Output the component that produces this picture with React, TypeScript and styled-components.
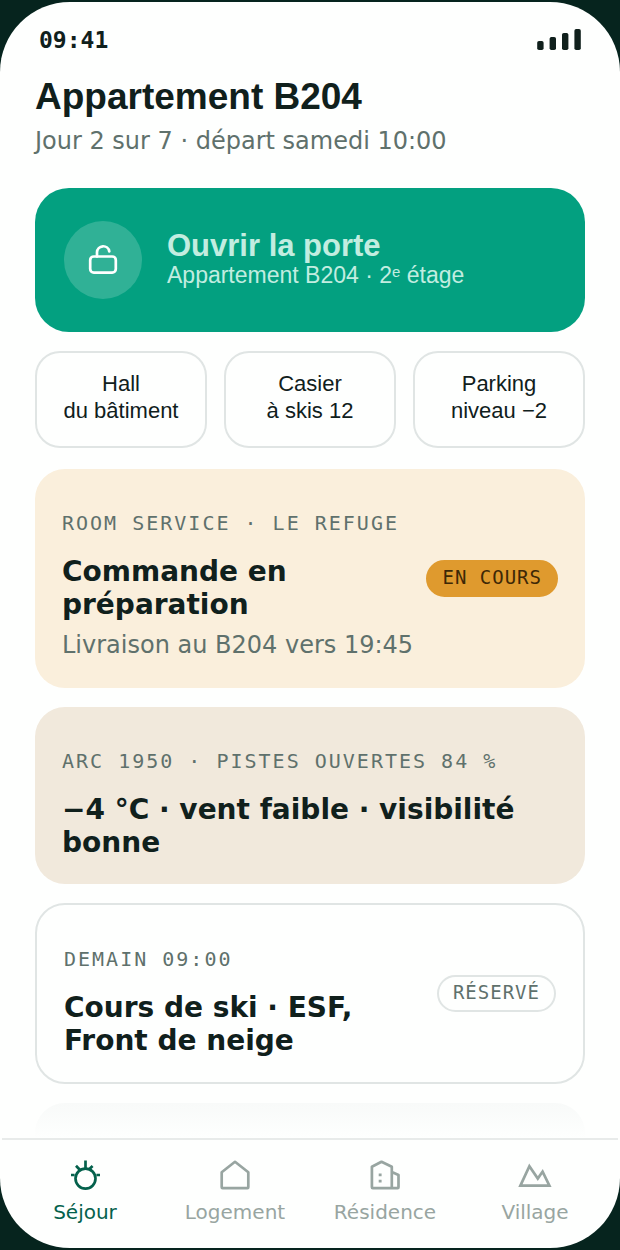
import React from "react";
import styled, { createGlobalStyle, css } from "styled-components";

const ink = "#10201c";
const muted = "#5f716c";
const faint = "#98a5a1";
const line = "#e0e5e4";
const sans = `"DejaVu Sans", sans-serif`;
const mono = `"DejaVu Sans Mono", monospace`;
const ui = `"Liberation Sans", "DejaVu Sans", sans-serif`;

const GlobalStyle = createGlobalStyle`
  *, *::before, *::after { box-sizing: border-box; }
  body {
    margin: 0;
    background: #06241e;
    color: ${ink};
    font-family: ${sans};
  }
  h1, h2, p { margin: 0; }
`;

const Phone = styled.div`
  display: flex;
  flex-direction: column;
  min-height: 100vh;
  border: solid #06241e;
  border-width: 2px 0;
`;

const Screen = styled.div`
  display: flex;
  flex: 1;
  flex-direction: column;
  overflow: hidden;
  border-radius: 70px;
  background: #fefffe;
`;

const StatusBar = styled.header`
  display: flex;
  align-items: center;
  justify-content: space-between;
  padding: 25px 39px 0;
`;

const Clock = styled.time`
  font: bold 23px/26px ${mono};
`;

const Signal = styled.svg`
  display: block;
  width: 44px;
  height: 22px;
  fill: ${ink};
`;

const Content = styled.main`
  display: flex;
  flex: 1;
  flex-direction: column;
  padding: 22px 35px 0;
`;

const Title = styled.h1`
  font: bold 37px/44px ${ui};
`;

const Stay = styled.p`
  margin-top: 6px;
  color: ${muted};
  font-size: 24px;
  line-height: 32px;
`;

const DoorButton = styled.button`
  display: flex;
  align-items: center;
  gap: 25px;
  margin-top: 31px;
  padding: 33px 29px;
  border: 0;
  border-radius: 34px;
  background: #03a080;
  color: #c2ede0;
  font-family: ${ui};
  text-align: left;
  cursor: pointer;
`;

const LockDisc = styled.span`
  display: grid;
  flex: none;
  place-items: center;
  width: 78px;
  height: 78px;
  border-radius: 50%;
  background: #30b196;
  color: #fff;
`;

const DoorText = styled.span`
  display: flex;
  flex-direction: column;
`;

const DoorTitle = styled.strong`
  font-size: 31px;
  line-height: 30px;
`;

const DoorSub = styled.span`
  font-size: 23px;
  line-height: 29px;
`;

const Ordinal = styled.sup`
  font-size: 15px;
  line-height: 1;
  vertical-align: 6px;
`;

const AccessRow = styled.div`
  display: grid;
  grid-template-columns: repeat(3, 1fr);
  gap: 17px;
  margin: 19px 0 21px;
`;

const AccessButton = styled.button`
  padding: 17px 8px 22px;
  border: 2px solid ${line};
  border-radius: 25px;
  background: transparent;
  color: ${ink};
  font: 22px/27px ${ui};
  cursor: pointer;
`;

const Cards = styled.div`
  display: flex;
  flex: 1;
  flex-direction: column;
  gap: 19px;
`;

type Tone = "amber" | "sand" | "plain";

const tones = {
  amber: css`background: #faefdc;`,
  sand: css`background: #f1e9dc;`,
  plain: css`border: 2px solid ${line};`,
};

const Card = styled.article<{ $tone: Tone }>`
  display: flex;
  align-items: center;
  justify-content: space-between;
  gap: 8px;
  padding: 0 27px;
  border-radius: 30px;
  ${({ $tone }) => tones[$tone]}
`;

const CardBody = styled.div`
  padding: 42px 0 25px;
`;

const Eyebrow = styled.p`
  color: ${muted};
  font: 20px/24px ${mono};
  letter-spacing: 2px;
  text-transform: uppercase;
`;

const CardTitle = styled.h2`
  margin-top: 20px;
  font-size: 28px;
  line-height: 33px;
`;

const CardNote = styled.p`
  margin-top: 6px;
  color: ${muted};
  font-size: 24px;
  line-height: 36px;
`;

const Badge = styled.span<{ $filled?: boolean }>`
  flex: none;
  padding: 3px 14px 6px;
  border: 2px solid ${({ $filled }) => ($filled ? "#df9a2e" : line)};
  border-radius: 19px;
  background: ${({ $filled }) => ($filled ? "#df9a2e" : "transparent")};
  color: ${({ $filled }) => ($filled ? "#3d2806" : muted)};
  font: 19px/24px ${mono};
  letter-spacing: 1px;
  text-transform: uppercase;
`;

const NextCard = styled.div`
  flex: 1;
  min-height: 35px;
  border-radius: 30px 30px 0 0;
  background: linear-gradient(#f8faf9, #fefffe);
`;

const TabBar = styled.nav`
  display: grid;
  grid-template-columns: repeat(4, 1fr);
  margin: 0 2px;
  padding: 17px 8px 23px;
  border-top: 2px solid #e8ebea;
`;

const Tab = styled.a<{ $active?: boolean }>`
  display: flex;
  flex-direction: column;
  align-items: center;
  gap: 6px;
  color: ${({ $active }) => ($active ? "#04614c" : faint)};
  font-size: 20px;
  line-height: 26px;
  text-decoration: none;
`;

const Icon = styled.svg`
  display: block;
  width: 36px;
  height: 36px;
  fill: none;
  stroke: currentColor;
  stroke-width: 2.7;
`;

const tabs = [
  {
    label: "Séjour",
    icon: (
      <>
        <circle cx="18.5" cy="21.6" r="10" />
        <path d="M18.5 3.5V12M4 18H7.6M29.4 18H33M9 8.8L13 13M25.6 9L21.6 12.8" />
      </>
    ),
  },
  {
    label: "Logement",
    icon: <path strokeLinejoin="round" d="M4.7 15.2L18 4.8L31.3 15.2V30.3Q31.3 31.2 30.4 31.2H5.6Q4.7 31.2 4.7 30.3Z" />,
  },
  {
    label: "Résidence",
    icon: (
      <>
        <path
          strokeLinejoin="round"
          d="M24.8 31.2H5.8Q4.9 31.2 4.9 30.3V9.8L14.5 4.8L24.8 9.8V31.2H30.6Q31.5 31.2 31.5 30.3V18L24.8 14.9"
        />
        <path d="M11.7 17.9H14.6M11.7 24.2H14.6" />
      </>
    ),
  },
  {
    label: "Village",
    icon: <path d="M3.4 28.6L12.4 9.2L20.8 21.6L25.6 14.6L32.4 28.6Z" />,
  },
];

const accesses = [
  ["Hall", "du bâtiment"],
  ["Casier", "à skis 12"],
  ["Parking", "niveau −2"],
];

export default function App() {
  return (
    <>
      <GlobalStyle />
      <Phone>
        <Screen>
          <StatusBar>
            <Clock>09:41</Clock>
            <Signal viewBox="0 0 44 22" aria-hidden="true">
              <rect x="0.2" y="12" width="6.4" height="9" rx="1.8" />
              <rect x="12.6" y="8" width="6.4" height="13" rx="1.8" />
              <rect x="25" y="4" width="6.4" height="17" rx="1.8" />
              <rect x="37.4" y="0" width="6.4" height="21" rx="1.8" />
            </Signal>
          </StatusBar>

          <Content>
            <Title>Appartement B204</Title>
            <Stay>Jour 2 sur 7 · départ samedi 10:00</Stay>

            <DoorButton type="button">
              <LockDisc>
                <Icon viewBox="0 0 36 36" aria-hidden="true">
                  <rect x="5.2" y="14.5" width="25.6" height="16.2" rx="3.6" />
                  <path strokeLinecap="round" d="M12 14.5V10.2A6.2 6.2 0 0 1 24.3 9.4" />
                </Icon>
              </LockDisc>
              <DoorText>
                <DoorTitle>Ouvrir la porte</DoorTitle>
                <DoorSub>
                  Appartement B204 · 2<Ordinal>e</Ordinal> étage
                </DoorSub>
              </DoorText>
            </DoorButton>

            <AccessRow>
              {accesses.map(([place, detail]) => (
                <AccessButton type="button" key={place}>
                  {place}
                  <br />
                  {detail}
                </AccessButton>
              ))}
            </AccessRow>

            <Cards>
              <Card $tone="amber">
                <CardBody>
                  <Eyebrow>Room service · Le Refuge</Eyebrow>
                  <CardTitle>Commande en préparation</CardTitle>
                  <CardNote>Livraison au B204 vers 19:45</CardNote>
                </CardBody>
                <Badge $filled>En cours</Badge>
              </Card>
              <Card $tone="sand">
                <CardBody>
                  <Eyebrow>Arc 1950 · Pistes ouvertes 84 %</Eyebrow>
                  <CardTitle>−4 °C · vent faible · visibilité bonne</CardTitle>
                </CardBody>
              </Card>
              <Card $tone="plain">
                <CardBody>
                  <Eyebrow>Demain 09:00</Eyebrow>
                  <CardTitle>Cours de ski · ESF, Front de neige</CardTitle>
                </CardBody>
                <Badge>Réservé</Badge>
              </Card>
              <NextCard />
            </Cards>
          </Content>

          <TabBar>
            {tabs.map(({ label, icon }, i) => (
              <Tab href="#" key={label} $active={i === 0} aria-current={i === 0 ? "page" : undefined}>
                <Icon viewBox="0 0 36 36" aria-hidden="true">
                  {icon}
                </Icon>
                {label}
              </Tab>
            ))}
          </TabBar>
        </Screen>
      </Phone>
    </>
  );
}
